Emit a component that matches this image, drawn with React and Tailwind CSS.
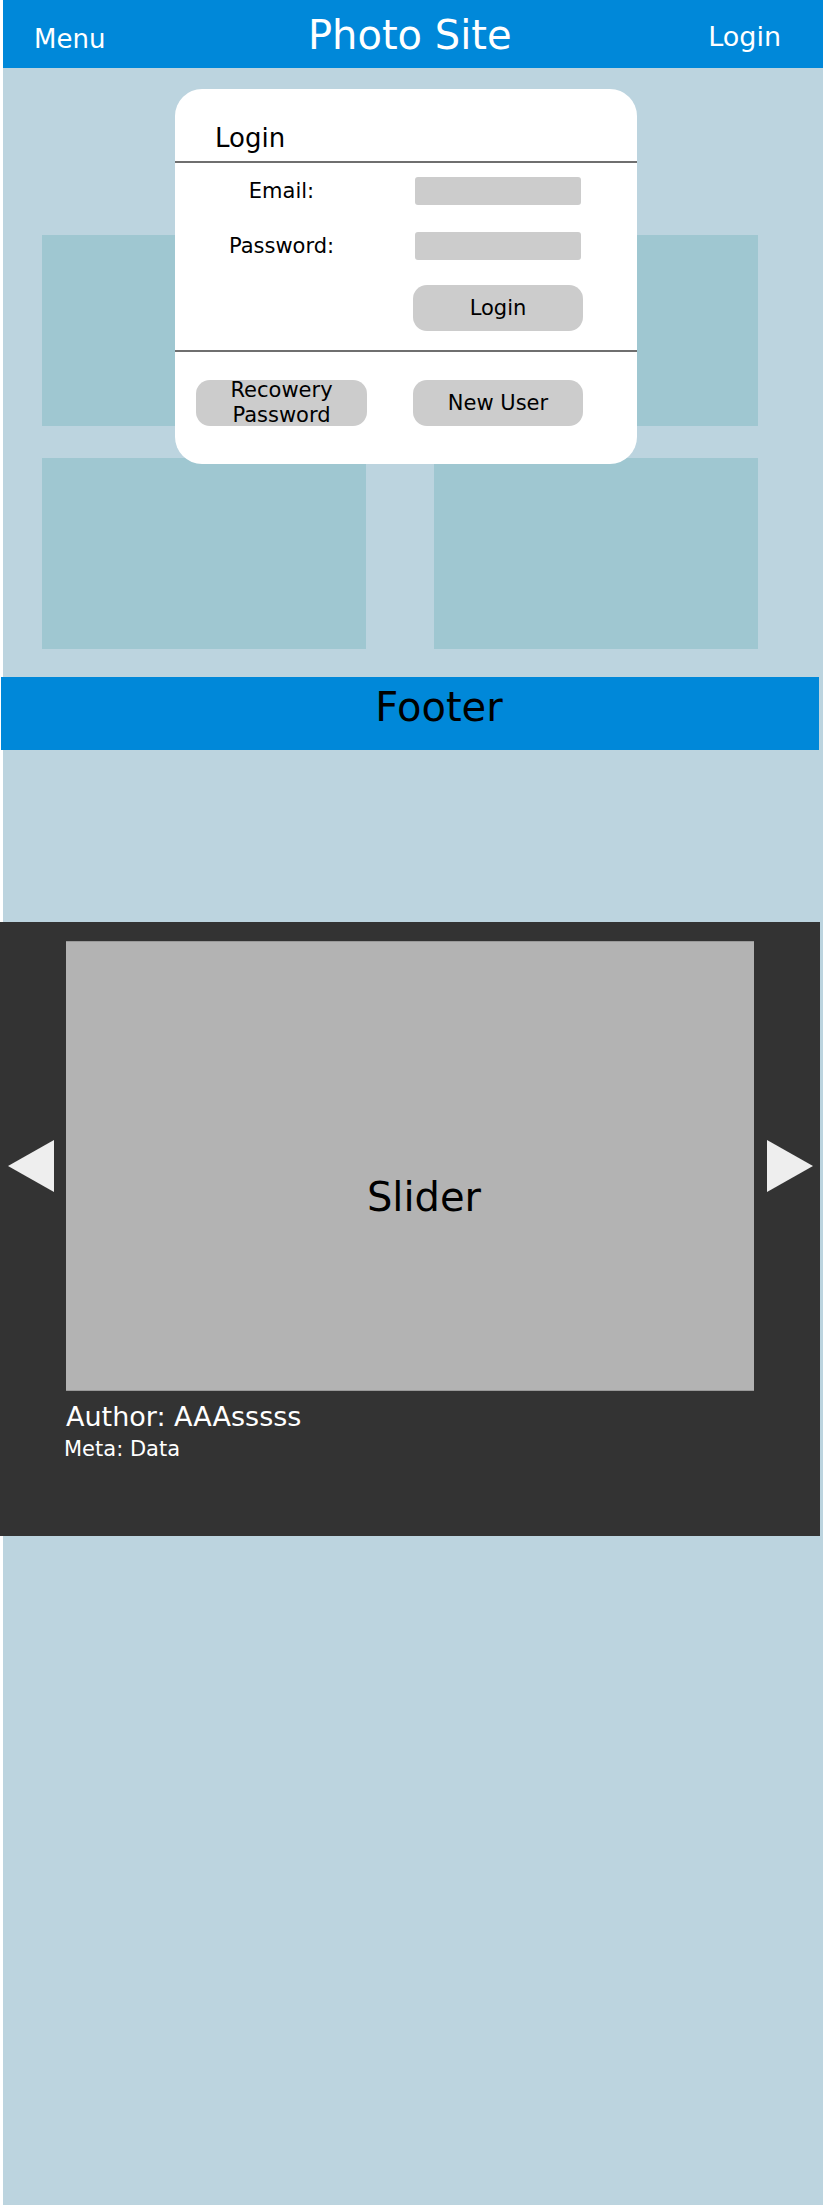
const Tile = () => <div className="h-[191px] bg-[#9fc7d1]" />;

const LoginCard = () => {
  return (
    <div className="absolute left-[172px] top-[21px] w-[462px] h-[375px] rounded-[27px] bg-white text-black">
      <p className="pt-[36px] pl-[40px] text-[26px] leading-none">Login</p>
      <div className="mt-[10px] h-[2px] bg-[#6f6f6f]" />

      {/* form rows */}
      <div className="mt-[14px] flex flex-col gap-[27px]">
        <div className="flex items-center">
          <span className="w-[213px] text-center text-[21px] leading-none">Email:</span>
          <div className="ml-[27px] w-[166px] h-[28px] rounded-[3px] bg-[#cccccc]" />
        </div>
        <div className="flex items-center">
          <span className="w-[213px] text-center text-[21px] leading-none">Password:</span>
          <div className="ml-[27px] w-[166px] h-[28px] rounded-[3px] bg-[#cccccc]" />
        </div>
      </div>
      <button className="mt-[25px] ml-[238px] w-[170px] h-[46px] rounded-[14px] bg-[#cccccc] text-[21px] leading-none">
        Login
      </button>

      <div className="mt-[19px] h-[2px] bg-[#6f6f6f]" />

      <div className="mt-[28px] flex">
        <button className="ml-[21px] w-[171px] h-[46px] rounded-[14px] bg-[#cccccc] text-[21px] leading-[25px] flex flex-col items-center justify-center">
          <span>Recowery</span>
          <span>Password</span>
        </button>
        <button className="ml-[46px] w-[170px] h-[46px] rounded-[14px] bg-[#cccccc] text-[21px] leading-none">
          New User
        </button>
      </div>
    </div>
  );
};

const Arrow = ({ dir }) => (
  <svg width="46" height="52" viewBox="0 0 46 52" className="shrink-0">
    {dir === 'left' ? (
      <polygon points="46,0 46,52 0,26" fill="#eeeeee" />
    ) : (
      <polygon points="0,0 0,52 46,26" fill="#eeeeee" />
    )}
  </svg>
);

const App = () => {
  return (
    <div
      className="min-h-[2205px] bg-white"
      style={{ fontFamily: '"DejaVu Sans", "Liberation Sans", sans-serif' }}
    >
      <div className="ml-[3px] min-h-[2205px] bg-[#bcd4df] pb-[1px]">
        {/* header */}
        <header className="h-[68px] bg-[#0088d9] text-white flex items-start">
          <span className="ml-[31px] mt-[26px] text-[26px] leading-none">Menu</span>
          <span className="flex-1 pl-[6px] mt-[15px] text-center text-[40px] leading-none">Photo Site</span>
          <span className="mr-[42px] mt-[23px] text-[27px] leading-none">Login</span>
        </header>

        {/* photo grid with login popup over it */}
        <div className="relative">
          <div className="pt-[167px] pl-[39px] w-[755px] grid grid-cols-2 gap-x-[68px] gap-y-[32px]">
            <Tile />
            <Tile />
            <Tile />
            <Tile />
          </div>
          <LoginCard />
        </div>

        {/* footer */}
        <footer className="mt-[28px] -ml-[2px] mr-[4px] h-[73px] bg-[#0088d9] pt-[7px] pl-[58px] text-center text-black text-[40px] leading-[46px]">
          Footer
        </footer>

        {/* slider */}
        <section className="mt-[172px] -ml-[3px] mr-[3px] h-[614px] bg-[#333333] pt-[19px]">
          <div className="flex items-center">
            <div className="ml-[8px]">
              <Arrow dir="left" />
            </div>
            <div className="ml-[12px] w-[688px] h-[450px] bg-[#b3b3b3] border-y border-[#999] flex items-center justify-center pt-[62px] pl-[28px] text-black text-[40px] leading-none">
              Slider
            </div>
            <div className="ml-[13px]">
              <Arrow dir="right" />
            </div>
          </div>
          <p className="mt-[12px] ml-[66px] text-white text-[27px] leading-none">Author: AAAsssss</p>
          <p className="mt-[9px] ml-[64px] text-white text-[21px] leading-none">Meta: Data</p>
        </section>
      </div>
    </div>
  );
};

export default App;
